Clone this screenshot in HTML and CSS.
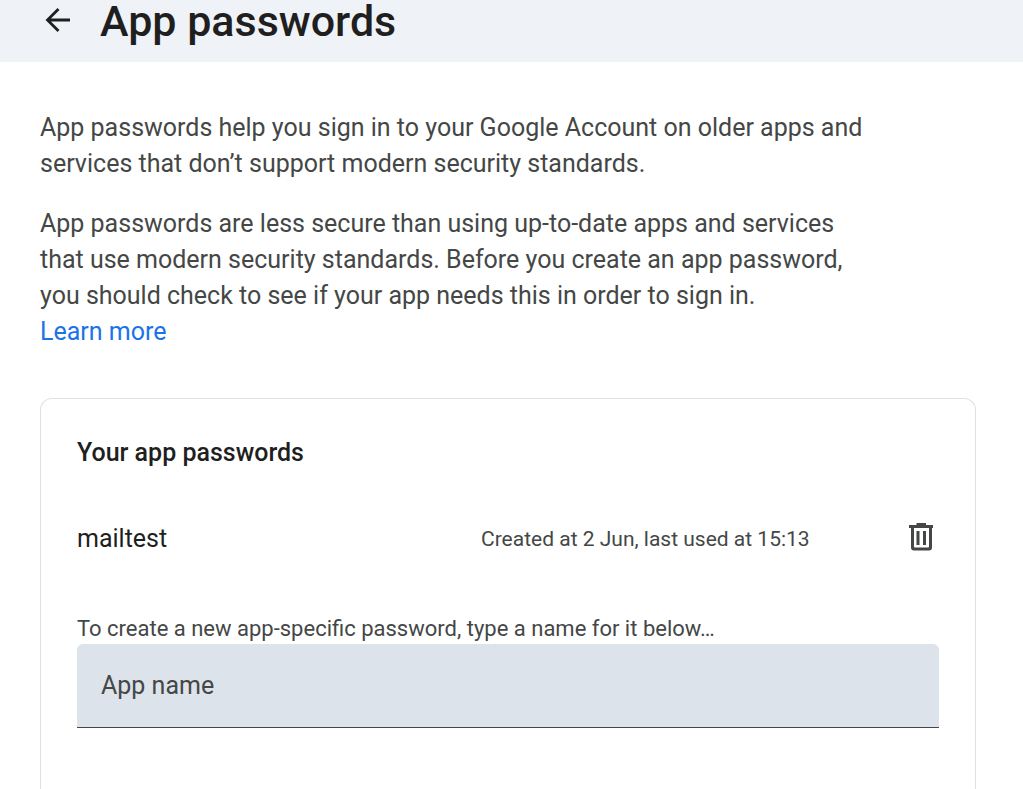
FILE: index.html
```html
<!DOCTYPE html>
<html lang="en-GB">
<head>
<meta charset="utf-8">
<meta name="viewport" content="width=device-width, initial-scale=1">
<title>App passwords</title>
<link rel="stylesheet" href="styles.css">
</head>
<body class="page">
<header class="topbar">
  <button class="icon-button" type="button" aria-label="Back">
    <svg class="back-icon" viewBox="0 0 36 36" aria-hidden="true"><path d="M30 17H7.500M18.500 6L7.500 17l11 11" fill="none" stroke="currentColor" stroke-width="2.800"/></svg>
  </button>
  <h1 class="title">App passwords</h1>
</header>
<main class="content">
  <div class="intro">
    <p class="text">App passwords help you sign in to your Google Account on older apps and services that don’t support modern security standards.</p>
    <p class="text">App passwords are less secure than using up-to-date apps and services that use modern security standards. Before you create an app password, you should check to see if your app needs this in order to sign in.<br><a class="link" href="#">Learn more</a></p>
  </div>
  <section class="card">
    <h2 class="card-title">Your app passwords</h2>
    <div class="entry">
      <span class="entry-name">mailtest</span>
      <span class="entry-info">Created at 2 Jun, last used at 15:13</span>
      <button class="icon-button" type="button" aria-label="Delete mailtest">
        <svg class="trash-icon" viewBox="0 0 36 36" aria-hidden="true"><path d="M13.500 2H23v2h7v3h-1v19.500q0 3-3 3H11q-3 0-3-3V7H6V4h7.500zM11 7v18.700q0 .8.8.8h13.400q.8 0 .8-.8V7zM13.500 10h3v14h-3zM20 10h3v14h-3z" fill="currentColor" fill-rule="evenodd"/></svg>
      </button>
    </div>
    <label class="hint" for="app-name">To create a new app-specific password, type a name for it below…</label>
    <input class="field" id="app-name" type="text" placeholder="App name">
  </section>
</main>
</body>
</html>
```
FILE: styles.css
```css
* {
  box-sizing: border-box;
}

.page {
  display: flex;
  flex-direction: column;
  min-height: 100vh;
  margin: 0;
  background: #fff;
  color: #444746;
  font-family: Roboto, "Liberation Sans", sans-serif;
  font-size: 25px;
  line-height: 36px;
}

.topbar {
  display: flex;
  align-items: center;
  gap: 24px;
  height: 62px;
  padding: 0 40px 20px;
  background: #eff3f8;
  color: #1f1f1f;
}

.icon-button {
  display: flex;
  padding: 0;
  border: 0;
  background: none;
  color: inherit;
  cursor: pointer;
}

.back-icon,
.trash-icon {
  width: 36px;
  height: 36px;
}

.title {
  margin: 0;
  font-size: 43px;
  font-weight: 500;
  line-height: 42px;
}

.content {
  display: flex;
  flex: 1;
  flex-direction: column;
  gap: 48px;
  padding: 48px 47px 0 40px;
}

.intro {
  display: flex;
  flex-direction: column;
  gap: 24px;
  max-width: 835px;
}

.text {
  margin: 0;
}

.link {
  color: #1a73e8;
  text-decoration: none;
}

.card {
  display: flex;
  flex: 1;
  flex-direction: column;
  padding: 36px 36px 60px;
  border: 1px solid #e0e0e0;
  border-bottom: 0;
  border-radius: 12px 12px 0 0;
}

.card-title {
  margin: 0;
  color: #1f1f1f;
  font-size: 25px;
  font-weight: 500;
}

.entry {
  display: grid;
  grid-template-columns: 404px 1fr auto;
  align-items: center;
  padding: 50px 0 57px;
}

.entry-name {
  color: #1f1f1f;
}

.entry-info {
  font-size: 21px;
}

.hint {
  font-size: 22px;
  line-height: 30px;
}

.field {
  width: 100%;
  height: 84px;
  padding: 0 24px;
  border: 0;
  border-bottom: 1px solid #444746;
  border-radius: 6px 6px 0 0;
  outline: 0;
  background: #dde3ea;
  color: #1f1f1f;
  font: inherit;
}

.field::placeholder {
  color: #444746;
  opacity: 1;
}
```
